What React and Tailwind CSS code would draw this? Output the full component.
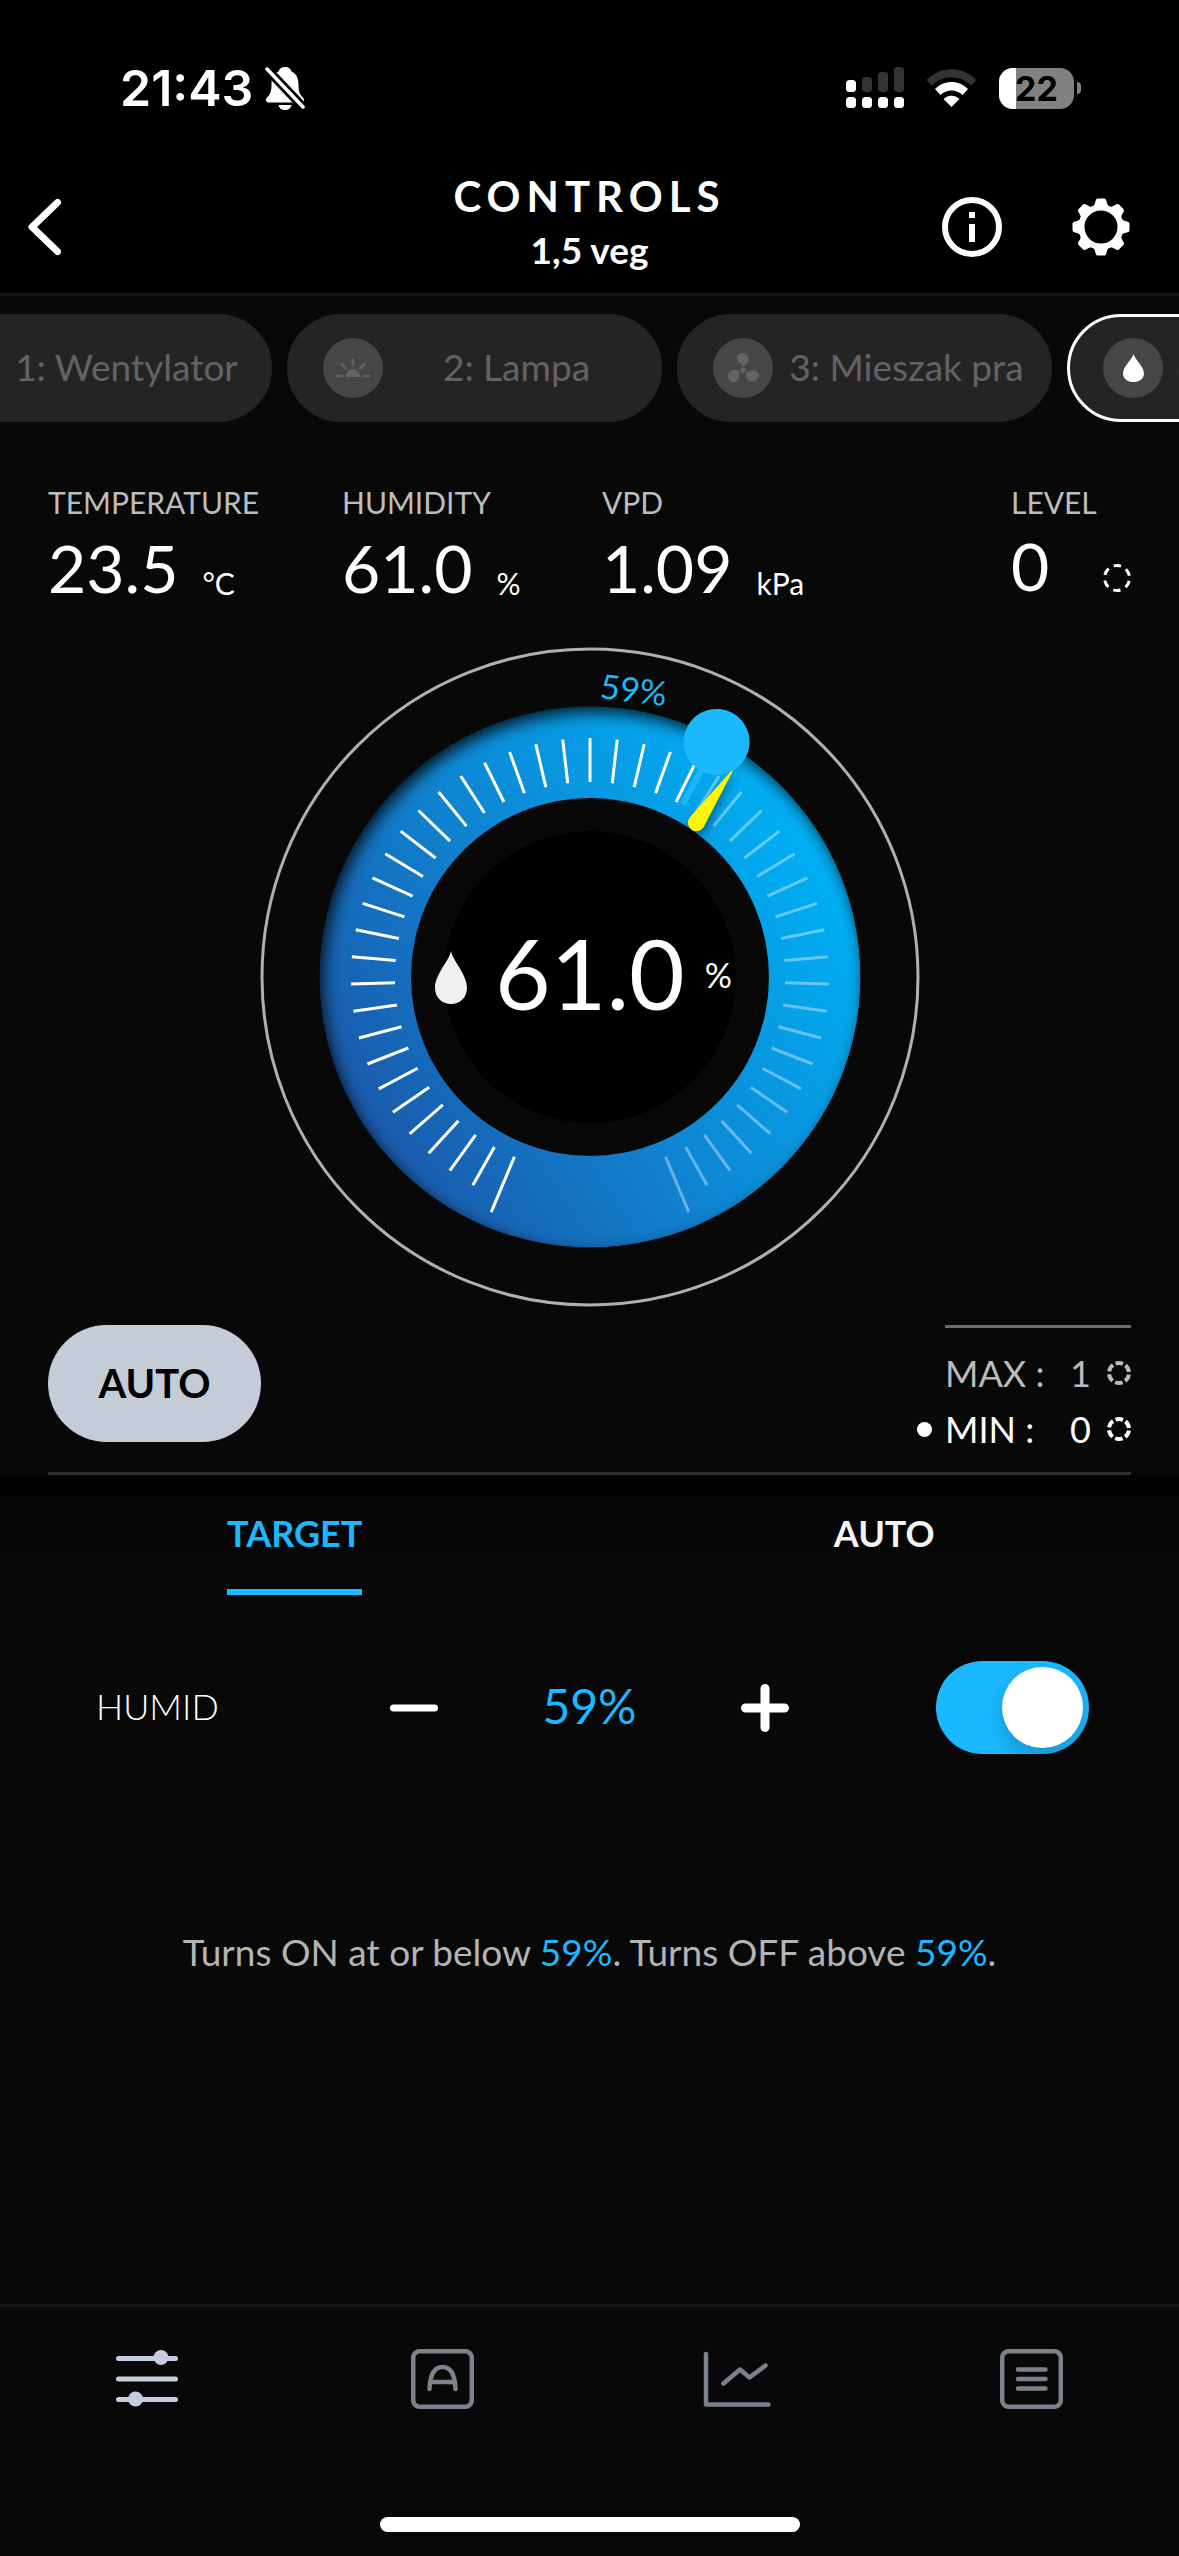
import { useLayoutEffect, useRef, useState } from "react";
import clsx from "clsx";

const STEP = 6.55; // degrees between two ticks
const SWEEP = 314.4; // degrees covered by 0-100%

const toAngle = (percent) => ((percent - 50) / 100) * SWEEP;

function Drop({ className }) {
  return (
    <svg viewBox="0 0 32 52" preserveAspectRatio="none" className={className} fill="currentColor" aria-hidden="true">
      <path d="M16 0C17.5 9 32 23 32 36C32 45.5 25 52 16 52S0 45.5 0 36C0 23 14.5 9 16 0Z" />
    </svg>
  );
}

function Sunrise({ className }) {
  return (
    <svg viewBox="0 0 36 20" className={className} stroke="currentColor" strokeWidth="2.6" strokeLinecap="round" aria-hidden="true">
      <path d="M11 19a7 8 0 0 1 14 0Z" fill="currentColor" stroke="none" />
      <path d="M1.5 18H7M29 18h5.5M18 1.500v5M6.500 6l4 4M29.500 6l-4 4" />
    </svg>
  );
}

function Fan({ className }) {
  return (
    <svg viewBox="-16 -16 32 32" className={className} fill="currentColor" aria-hidden="true">
      <circle r="2.800" cy="2" />
      {[0, 122, 238].map((deg) => (
        <path key={deg} transform={`rotate(${deg} 0 2)`} d="M0-2C-3.500-4-6.500-7.500-6-11.500C-5-15.500 1.500-16 4-13C7.500-9 5.500-3 0-2Z" />
      ))}
    </svg>
  );
}

// Broken ring made of six dashes, "fill" is the drawn share of each dash
function LevelRing({ size, width, fill, className }) {
  const r = (size - width) / 2;
  const part = (2 * Math.PI * r) / 6;
  return (
    <svg width={size} height={size} viewBox={`0 0 ${size} ${size}`} className={className} aria-hidden="true">
      <circle
        cx={size / 2}
        cy={size / 2}
        r={r}
        fill="none"
        stroke="currentColor"
        strokeWidth={width}
        strokeDasharray={`${part * fill} ${part * (1 - fill)}`}
        strokeDashoffset={(-part * (1 - fill)) / 2}
      />
    </svg>
  );
}

function StatusBar() {
  return (
    <div className="flex items-center justify-between pt-[62px] pb-[47px] pl-[120px] pr-[98px]">
      <div className="flex items-center gap-3">
        <span className="font-['Inter'] text-[50px] leading-[52px] font-semibold">21:43</span>
        <svg width="40" height="44" viewBox="0 0 40 44" aria-hidden="true">
          <path d="M20 1c3.500 0 6 2 6.500 4.500C32 8 33.500 13 33.500 19c0 7 1.500 9.500 4.500 12.500c2 2.500 1 5-2 5H4c-3 0-4-2.500-2-5c3-3 4.500-5.500 4.500-12.500c0-6 1.500-11 7-13.500C14 3 16.500 1 20 1Z" fill="white" />
          <path d="M13.500 39h13c-.5 3-3 5-6.500 5s-6-2-6.500-5Z" fill="white" />
          <path d="M2 3l36 38" stroke="black" strokeWidth="9" />
          <path d="M2 3l36 38" stroke="white" strokeWidth="3.500" strokeLinecap="round" />
        </svg>
      </div>
      <div className="flex items-center gap-[22px]">
        <svg width="58" height="42" viewBox="0 0 58 42" aria-hidden="true">
          {[13, 10, 5, 0].map((top, i) => (
            <g key={top}>
              <rect x={i * 16} y={top} width="10" height={25 - top} rx="3.500" fill={i === 0 ? "#fff" : "#333"} />
              <rect x={i * 16} y="30" width="10" height="11" rx="3.500" fill="#fff" />
            </g>
          ))}
        </svg>
        <svg width="51" height="38" viewBox="0 0 51 38" aria-hidden="true">
          <path d="M0.500 11C14-3.500 37-3.500 50.500 11L45 16.500C34 5.500 17 5.500 6 16.500Z" fill="#333" />
          <path d="M9 20C18 10.500 33 10.500 42 20L36.500 26C30.500 20 20.500 20 14.500 26Z" fill="#fff" />
          <path d="M17.500 30C22 25.500 29 25.500 33.500 30L25.500 38Z" fill="#fff" />
        </svg>
        <div className="flex items-center gap-[3px]">
          <div className="relative flex h-[41px] w-[75px] items-center justify-center overflow-hidden rounded-[14px] bg-[#818181]">
            <div className="absolute inset-y-0 left-0 w-[17px] bg-white" />
            <span className="relative font-['Inter'] text-[34px] font-bold leading-[41px] text-black">22</span>
          </div>
          <div className="h-3 w-1 rounded-r-full bg-[#818181]" />
        </div>
      </div>
    </div>
  );
}

function Header() {
  return (
    <header className="grid h-[132px] grid-cols-[1fr_auto_1fr] items-center">
      <button type="button" aria-label="Back" className="ml-7 justify-self-start">
        <svg width="34" height="58" viewBox="0 0 34 58" fill="none" stroke="white" strokeWidth="7" strokeLinecap="round" strokeLinejoin="round">
          <path d="M29.500 4.500L4 29l25.500 24.500" />
        </svg>
      </button>
      <div className="pb-[10px] text-center">
        <h1 className="text-[42px] font-bold leading-12 tracking-[6px]">CONTROLS</h1>
        <p className="mt-2 text-[37px] leading-11 font-bold">1,5 veg</p>
      </div>
      <div className="mr-12 flex items-center gap-[69px] justify-self-end">
        <button type="button" aria-label="Information">
          <svg width="60" height="60" viewBox="0 0 60 60" fill="none" stroke="white" strokeWidth="6">
            <circle cx="30" cy="30" r="27" />
            <path d="M30 15v6M30 27v18" />
          </svg>
        </button>
        <button type="button" aria-label="Settings">
          <svg width="60" height="60" viewBox="-30 -30 60 60" fill="white">
            <circle r="19.500" fill="none" stroke="white" strokeWidth="6" />
            {[0, 45, 90, 135, 180, 225, 270, 315].map((deg) => (
              <path key={deg} transform={`rotate(${deg})`} d="M-9-20C-7-21-6-23-5.500-26Q-5-28.500-3.500-28.500H3.500Q5-28.500 5.500-26C6-23 7-21 9-20Z" />
            ))}
          </svg>
        </button>
      </div>
    </header>
  );
}

const PORTS = [
  { id: 1, name: "1: Wentylator", icon: <Fan className="h-8 w-8" /> },
  { id: 2, name: "2: Lampa", icon: <Sunrise className="h-5 w-9" /> },
  { id: 3, name: "3: Mieszak pra", icon: <Fan className="h-8 w-8" /> },
  { id: 4, name: "4: Nawilżacz A", icon: <Drop className="h-7 w-[21px]" /> },
];

function PortStrip() {
  const [active, setActive] = useState(4);
  const strip = useRef(null);

  useLayoutEffect(() => {
    strip.current.scrollLeft = 118;
  }, []);

  return (
    <div ref={strip} className="flex gap-[15px] overflow-x-auto px-[15px] pt-[18px] [scrollbar-width:none]">
      {PORTS.map((port) => (
        <button
          key={port.id}
          type="button"
          onClick={() => setActive(port.id)}
          className={clsx(
            "flex h-[108px] w-[375px] shrink-0 items-center rounded-full border-3 bg-[#242424] pl-[33px] pr-[9px]",
            active === port.id ? "border-white text-white" : "border-[#242424] text-[#636366]"
          )}
        >
          <span className="flex size-[60px] shrink-0 items-center justify-center rounded-full bg-[#464646]">{port.icon}</span>
          <span className="flex-1 whitespace-nowrap pb-[2px] text-center text-[37px]">{port.name}</span>
        </button>
      ))}
    </div>
  );
}

function Reading({ label, value, unit }) {
  return (
    <div>
      <p className="text-3xl leading-9 text-[#bdbdbd]">{label}</p>
      <p className="mt-3 flex items-end gap-6 text-[66px] leading-[72px]">
        {value}
        <span className="pb-[3px] text-3xl leading-9">{unit}</span>
      </p>
    </div>
  );
}

function Readings() {
  return (
    <section className="grid grid-cols-[294fr_260fr_409fr_120fr] px-12 pt-[62px]">
      <Reading label="TEMPERATURE" value="23.5" unit="°C" />
      <Reading label="HUMIDITY" value="61.0" unit="%" />
      <Reading label="VPD" value="1.09" unit="kPa" />
      <div>
        <p className="text-3xl leading-9 text-[#bdbdbd]">LEVEL</p>
        <div className="mt-[10px] flex items-end justify-between">
          <span className="text-[66px] leading-[72px]">0</span>
          <LevelRing size={28} width={3} fill={0.56} className="mb-[10px]" />
        </div>
      </div>
    </section>
  );
}

function Dial({ target, current }) {
  const ticks = [];
  for (let i = -24; i <= 24; i++) {
    const end = Math.abs(i) === 24;
    ticks.push(
      <line
        key={i}
        y1={end ? -255 : -239}
        y2="-195"
        transform={`rotate(${i * STEP})`}
        stroke="white"
        strokeWidth="3"
        strokeOpacity={i * STEP <= toAngle(target) ? 1 : 0.38}
      />
    );
  }

  return (
    <section className="relative mx-auto mt-[43px] w-[660px]">
      <svg viewBox="-330 -330 660 660" className="block w-full" aria-hidden="true">
        <defs>
          <linearGradient id="ring" x1="0.1" y1="0.75" x2="0.9" y2="0.25">
            <stop offset="0" stopColor="#1a5cae" />
            <stop offset="0.5" stopColor="#0d89d5" />
            <stop offset="1" stopColor="#00aff3" />
          </linearGradient>
          <clipPath id="disc">
            <circle r="270.500" />
          </clipPath>
          <filter id="soft" x="-20%" y="-20%" width="140%" height="140%">
            <feGaussianBlur stdDeviation="8" />
          </filter>
          <filter id="needleShadow" x="-200%" y="-50%" width="500%" height="200%">
            <feGaussianBlur stdDeviation="4" />
          </filter>
        </defs>

        <circle r="328" fill="none" stroke="#b0b0b0" strokeWidth="3" />
        <g clipPath="url(#disc)">
          <circle r="270.500" fill="url(#ring)" />
          <circle cx="4" cy="6" r="301" fill="none" stroke="black" strokeOpacity="0.85" strokeWidth="60" filter="url(#soft)" />
        </g>
        <circle r="179" fill="#080808" />
        <circle r="146" fill="black" />
        {ticks}

        <line y1="-250" y2="-196" stroke="#1ab9ff" strokeWidth="6" transform={`rotate(${toAngle(target)})`} />
        <g transform={`rotate(${toAngle(current)})`}>
          <path d="M-9-186L0-256L9-186A9 9 0 0 1-9-186Z" transform="translate(4 2)" fill="black" fillOpacity="0.35" filter="url(#needleShadow)" />
          <path d="M-8.500-187.500L0-256L8.500-187.500A8.500 8.500 0 0 1-8.500-187.500Z" fill="#fff600" />
        </g>
        <circle cy="-267" r="33" fill="#1ab9ff" transform={`rotate(${toAngle(target)})`} />
        <text transform="rotate(7)" x="-25" y="-278" fill="#1ab9ff" fontSize="34">
          {target}%
        </text>
      </svg>
      <div className="absolute inset-0 flex items-center justify-center gap-[28px] pr-3 pb-2">
        <Drop className="mt-2 h-[53px] w-8 text-[#f0f0f3]" />
        <p className="flex items-center gap-5 text-8xl leading-none">
          61.0
          <span className="pt-1 text-[34px]">%</span>
        </p>
      </div>
    </section>
  );
}

function Limit({ name, level, selected }) {
  return (
    <div className={clsx("relative flex items-center", selected ? "text-white" : "text-[#bbbbbb]")}>
      {selected && <span className="absolute -left-7 size-[15px] rounded-full bg-white" />}
      <dt className="flex-1">{name} :</dt>
      <dd className="flex items-center gap-4">
        {level}
        <LevelRing size={24} width={4} fill={0.72} />
      </dd>
    </div>
  );
}

function ModeRow() {
  return (
    <section className="mx-12 mt-[18px] flex items-start justify-between border-b-3 border-[#2e2f31] pb-[15px]">
      <button type="button" className="h-[117px] w-[213px] rounded-full bg-[#c3ccd7] pb-[2px] text-[40px] font-bold text-black">
        AUTO
      </button>
      <dl className="w-[186px] border-t-3 border-[#6b6b6b] pt-[17px] text-4xl leading-14">
        <Limit name="MAX" level={1} />
        <Limit name="MIN" level={0} selected />
      </dl>
    </section>
  );
}

function Tabs() {
  const [tab, setTab] = useState("TARGET");
  return (
    <div role="tablist" className="grid grid-cols-2 bg-linear-to-b from-[#030303] to-[#080808] pt-[36px]">
      {["TARGET", "AUTO"].map((name) => (
        <button
          key={name}
          type="button"
          role="tab"
          aria-selected={tab === name}
          onClick={() => setTab(name)}
          className={clsx(
            "justify-self-center border-b-6 pb-[34px] text-4xl leading-11 font-bold",
            tab === name ? "border-[#1ab9ff] text-[#1ab9ff]" : "border-transparent text-[#f3f3f3]"
          )}
        >
          {name}
        </button>
      ))}
    </div>
  );
}

function TargetPanel({ target, setTarget }) {
  const [on, setOn] = useState(true);
  return (
    <section className="px-[90px] pt-[66px]">
      <div className="grid grid-cols-[1fr_400px_1fr] items-center">
        <label htmlFor="humid" className="pb-1 pl-[6px] text-4xl leading-11 font-light">
          HUMID
        </label>
        <div className="flex items-center justify-between">
          <button type="button" aria-label="Decrease" onClick={() => setTarget(target - 1)}>
            <svg width="48" height="48" viewBox="0 0 48 48" stroke="white" strokeWidth="7" strokeLinecap="round">
              <path d="M3.500 24h41" />
            </svg>
          </button>
          <output className="pb-1 text-5xl text-[#1ab9ff]">{target}%</output>
          <button type="button" aria-label="Increase" onClick={() => setTarget(target + 1)}>
            <svg width="48" height="48" viewBox="0 0 48 48" stroke="white" strokeWidth="9" strokeLinecap="round">
              <path d="M4.500 24h39M24 4.500v39" />
            </svg>
          </button>
        </div>
        <input
          id="humid"
          type="checkbox"
          checked={on}
          onChange={(e) => setOn(e.target.checked)}
          className="flex h-[93px] w-[153px] appearance-none items-center justify-self-end rounded-full bg-[#39393d] px-[6px] before:size-[81px] before:rounded-full before:bg-white before:shadow-[0_9px_20px_rgba(0,0,0,0.2)] checked:justify-end checked:bg-[#1ab9ff]"
        />
      </div>
      <p className="mt-[174px] text-center text-[37px] leading-12 text-[#b4b4b4]">
        Turns ON at or below <span className="text-[#1ab9ff]">{target}%</span>. Turns OFF above{" "}
        <span className="text-[#1ab9ff]">{target}%</span>.
      </p>
    </section>
  );
}

function BottomNav() {
  return (
    <footer className="mt-auto border-t-3 border-[#161616] pt-[42px] pb-6">
      <nav className="grid grid-cols-4 justify-items-center text-[#7b828c]">
        <a href="#controls" aria-label="Controls" className="text-[#c5cee0]">
          <svg width="64" height="60" viewBox="0 0 64 60" stroke="currentColor" strokeWidth="5" strokeLinecap="round">
            <path d="M3.500 9.500h57M3.500 30h57M3.500 50.500h57" />
            <circle cx="46" cy="8.500" r="7.500" fill="currentColor" stroke="none" />
            <circle cx="20.500" cy="50" r="7.500" fill="currentColor" stroke="none" />
          </svg>
        </a>
        <a href="#automations" aria-label="Automations">
          <svg width="63" height="60" viewBox="0 0 63 60" fill="none" stroke="currentColor" strokeWidth="4.500" strokeLinecap="round">
            <rect x="2.200" y="2.200" width="58.600" height="55.600" rx="6.500" />
            <path d="M18.500 40C19 26 23 18 31.500 18S44 26 44.500 40M20 33h23" />
          </svg>
        </a>
        <a href="#history" aria-label="History">
          <svg width="68" height="60" viewBox="0 0 68 60" fill="none" stroke="currentColor" strokeWidth="4.500" strokeLinecap="round" strokeLinejoin="round">
            <path d="M3 5v50.500h62.500M20.500 34.500l16.500-14l9.500 8L62.500 16.500" />
          </svg>
        </a>
        <a href="#log" aria-label="Log">
          <svg width="63" height="60" viewBox="0 0 63 60" fill="none" stroke="currentColor" strokeWidth="4.500" strokeLinecap="round">
            <rect x="2.200" y="2.200" width="58.600" height="55.600" rx="6.500" />
            <path d="M18 20.500h27.500M18 30h27.500M18 39.500h27.500" />
          </svg>
        </a>
      </nav>
      <div className="mx-auto mt-[108px] h-[15px] w-[420px] rounded-full bg-white" />
    </footer>
  );
}

function App() {
  const [target, setTarget] = useState(59);

  return (
    <div className="flex min-h-screen flex-col bg-[#080808] font-['Lato',sans-serif] text-white">
      <div className="border-b-3 border-[#161616] bg-black">
        <StatusBar />
        <Header />
      </div>
      <PortStrip />
      <Readings />
      <Dial target={target} current={61} />
      <ModeRow />
      <Tabs />
      <TargetPanel target={target} setTarget={setTarget} />
      <BottomNav />
    </div>
  );
}

export default App;
